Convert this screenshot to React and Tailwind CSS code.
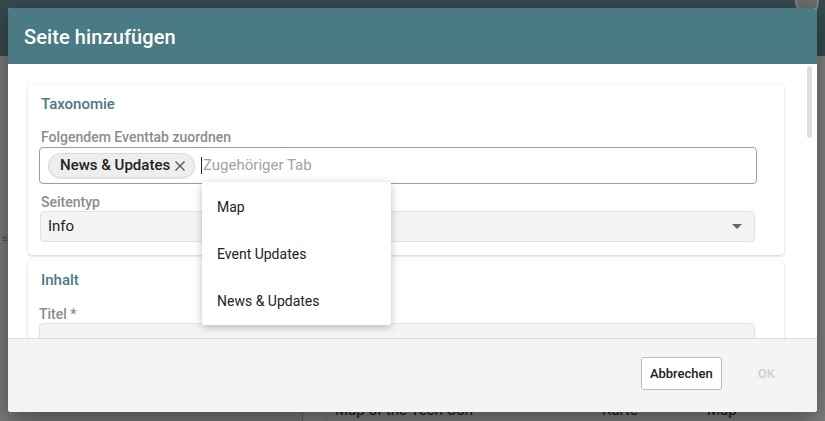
import React from "react";

export default function App() {
  return (
    <div
      className="relative w-[825px] h-[421px] overflow-hidden bg-[#f5f5f5]"
      style={{ fontFamily: "Roboto, 'Noto Sans', sans-serif" }}
    >
      {/* background page */}
      <div className="flex flex-col h-full">
        <div className="h-[56px] bg-[#6d929c] flex items-start justify-end pr-[6px]">
          <div className="w-[24px] h-[24px] -mt-[10px] rounded-full bg-[#d9d9d9] border-2 border-white"></div>
        </div>
        <div className="flex-1 flex">
          <div className="w-[302px] flex flex-col justify-center pl-[2px]">
            <span className="text-[10px] text-[#999]">≡</span>
          </div>
          <div className="flex-1 flex border-l border-[#bdbdbd] bg-white">
            <div className="w-[24px] border-r border-[#e6e6e6]"></div>
            <div className="flex-1 flex flex-col justify-end">
              <div className="flex items-center h-[20px] pl-[8px] text-[15px] text-[#333] mb-[1px]">
                <span className="w-[267px]">Map of the Tech Con</span>
                <span className="w-[105px]">Karte</span>
                <span>Map</span>
              </div>
            </div>
          </div>
        </div>
      </div>

      {/* overlay */}
      <div className="absolute inset-0 bg-black/50"></div>

      {/* dialog */}
      <div className="absolute left-[8px] top-[8px] w-[809px] h-[404px] rounded-[3px] overflow-hidden bg-white shadow-[0_8px_24px_rgba(0,0,0,0.4)] flex flex-col">
        <div className="h-[56px] bg-[#4a7a83] flex items-center px-[16px] shrink-0">
          <h1 className="text-[20px] font-medium text-white tracking-[0.1px] mt-[2px]">Seite hinzufügen</h1>
        </div>

        <div className="relative flex-1 overflow-hidden">
          <div className="pl-[20px] pr-[33px] pt-[20px] flex flex-col gap-[6px]">
            {/* Taxonomie card */}
            <div className="rounded-[4px] bg-white shadow-[0_1px_3px_rgba(0,0,0,0.2)] pl-[11px] pr-[27px] pt-[10px] pb-[13px] flex flex-col">
              <div className="text-[15px] font-medium text-[#4a7a83] pl-[2px] leading-[20px]">Taxonomie</div>
              <div className="mt-[14px] text-[14px] font-medium text-[#8c8c8c] pl-[2px] leading-[18px]">Folgendem Eventtab zuordnen</div>
              <div className="mt-[1px] h-[37px] rounded-[4px] border border-[#86a7ad] flex items-center pl-[8px]">
                <div className="h-[25px] w-[147px] rounded-full bg-[#eeeeee] border border-[#dadada] shadow-[0_1px_1px_rgba(0,0,0,0.1)] flex items-center pl-[11px] gap-[4px]">
                  <span className="text-[15px] font-medium text-[#222]">News &amp; Updates</span>
                  <svg width="12" height="12" viewBox="0 0 12 12">
                    <path d="M1.5 1.5 L10.5 10.5 M10.5 1.5 L1.5 10.5" stroke="#555" strokeWidth="1.4" />
                  </svg>
                </div>
                <div className="ml-[6px] w-px h-[17px] bg-[#222]"></div>
                <span className="ml-px text-[15px] text-[#a3a3a3]">Zugehöriger Tab</span>
              </div>
              <div className="mt-[9px] text-[14px] font-medium text-[#8c8c8c] pl-[2px] leading-[18px]">Seitentyp</div>
              <div className="h-[31px] rounded-[4px] border border-[#e2e2e2] bg-[#f4f4f4] flex items-center justify-between pl-[7px] pr-[12px] mr-[2px] ml-px">
                <span className="text-[15px] text-[#222]">Info</span>
                <svg width="10" height="6" viewBox="0 0 10 6">
                  <path d="M0 0 L10 0 L5 5 Z" fill="#666" />
                </svg>
              </div>
            </div>

            {/* Inhalt card */}
            <div className="rounded-[4px] bg-white shadow-[0_1px_3px_rgba(0,0,0,0.2)] pl-[11px] pr-[27px] pt-[9px] pb-[13px] flex flex-col">
              <div className="text-[15px] font-medium text-[#4a7a83] pl-[2px] leading-[20px]">Inhalt</div>
              <div className="mt-[15px] text-[14px] font-medium text-[#8c8c8c] leading-[18px]">Titel *</div>
              <div className="h-[31px] rounded-[4px] border border-[#e2e2e2] bg-[#f4f4f4] mr-[2px]"></div>
            </div>
          </div>

          {/* scrollbar */}
          <div className="absolute right-[5px] top-[2px] w-[5px] h-[72px] rounded-full bg-[#dedede]"></div>

          {/* dropdown menu */}
          <div className="absolute left-[194px] top-[118px] w-[189px] h-[143px] bg-white rounded-[2px] shadow-[0_2px_8px_rgba(0,0,0,0.25)] flex flex-col pt-[2px]">
            <div className="h-[47px] flex items-center pl-[15px] text-[14px] text-[#222]">Map</div>
            <div className="h-[47px] flex items-center pl-[15px] text-[14px] text-[#222]">Event Updates</div>
            <div className="h-[47px] flex items-center pl-[15px] text-[14px] text-[#222]">News &amp; Updates</div>
          </div>
        </div>

        {/* footer */}
        <div className="h-[74px] shrink-0 bg-[#f4f4f4] border-t border-[#dcdcdc] flex items-start justify-end pt-[18px] pr-[42px] gap-[36px]">
          <button className="h-[33px] w-[81px] rounded-[3px] border border-[#bdbdbd] bg-white text-[13px] font-medium text-[#222]">Abbrechen</button>
          <span className="h-[33px] flex items-center text-[13px] font-medium text-[#cfcfcf]">OK</span>
        </div>
      </div>
    </div>
  );
}
